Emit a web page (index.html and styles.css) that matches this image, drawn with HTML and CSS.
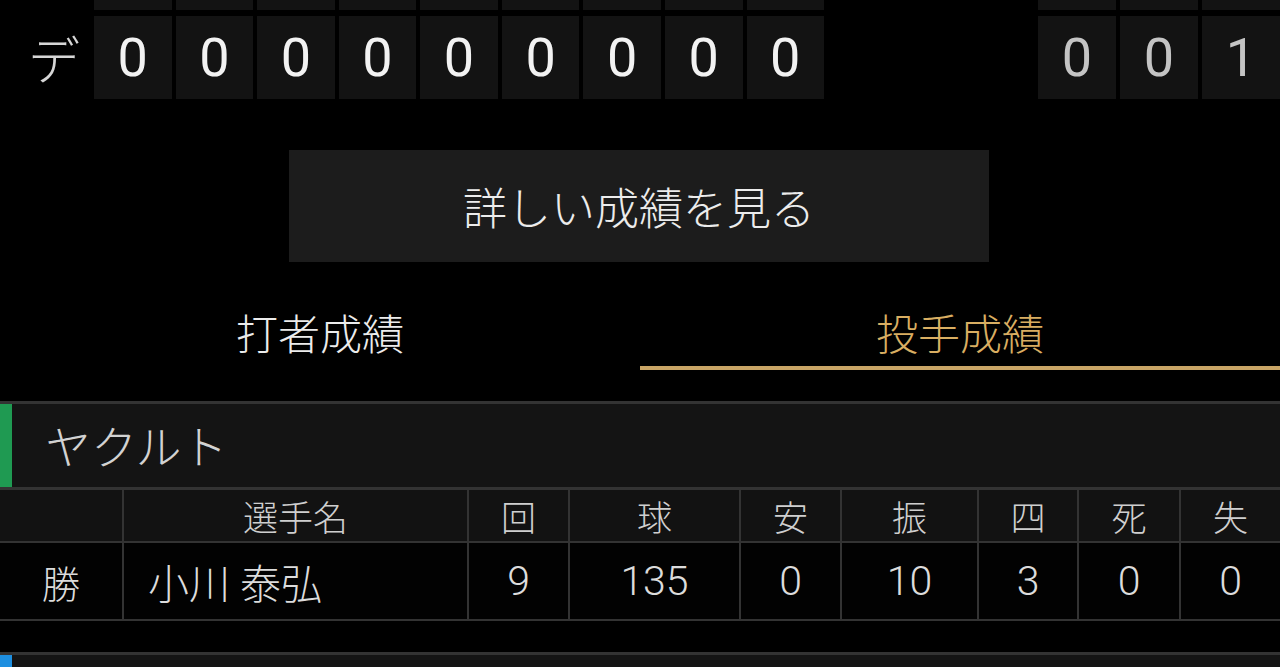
FILE: index.html
```html
<!DOCTYPE html>
<html lang="ja">
<head>
<meta charset="utf-8">
<link rel="stylesheet" href="styles.css">
</head>
<body>
<div class="page">
  <section class="score">
    <div class="score-row partial">
      <div class="team"></div>
      <div class="innings">
        <div class="cell"></div><div class="cell"></div><div class="cell"></div>
        <div class="cell"></div><div class="cell"></div><div class="cell"></div>
        <div class="cell"></div><div class="cell"></div><div class="cell"></div>
      </div>
      <div class="totals">
        <div class="cell"></div><div class="cell"></div><div class="cell"></div>
      </div>
    </div>
    <div class="score-row full">
      <div class="team">デ</div>
      <div class="innings">
        <div class="cell">0</div><div class="cell">0</div><div class="cell">0</div>
        <div class="cell">0</div><div class="cell">0</div><div class="cell">0</div>
        <div class="cell">0</div><div class="cell">0</div><div class="cell">0</div>
      </div>
      <div class="totals">
        <div class="cell">0</div><div class="cell">0</div><div class="cell">1</div>
      </div>
    </div>
  </section>

  <div class="btn-wrap">
    <div class="detail-btn">詳しい成績を見る</div>
  </div>

  <nav class="tabs">
    <div class="tab">打者成績</div>
    <div class="tab active">投手成績</div>
  </nav>

  <div class="team-head green">ヤクルト</div>
  <div class="stats">
    <div class="hd"></div>
    <div class="hd">選手名</div>
    <div class="hd">回</div>
    <div class="hd">球</div>
    <div class="hd">安</div>
    <div class="hd">振</div>
    <div class="hd">四</div>
    <div class="hd">死</div>
    <div class="hd">失</div>
    <div class="td res">勝</div>
    <div class="td name">小川 泰弘</div>
    <div class="td">9</div>
    <div class="td">135</div>
    <div class="td">0</div>
    <div class="td">10</div>
    <div class="td">3</div>
    <div class="td">0</div>
    <div class="td">0</div>
  </div>

  <div class="team-head blue next"></div>
</div>
</body>
</html>
```

FILE: styles.css
```css
* { box-sizing: border-box; }
html, body { margin: 0; padding: 0; background: #000; }
body {
  width: 1280px;
  height: 667px;
  overflow: hidden;
  font-family: "Roboto", "Noto Sans CJK JP", sans-serif;
  color: #e8e8e8;
}
.page { display: flex; flex-direction: column; height: 667px; overflow: hidden; }

.score { display: flex; flex-direction: column; gap: 6px; flex: none; }
.score-row { display: flex; }
.score-row.partial { height: 10px; }
.score-row.full { height: 83px; }
.team {
  width: 94px;
  padding-left: 28px;
  font-family: "Noto Sans CJK JP", sans-serif;
  font-weight: 300;
  font-size: 52px;
  line-height: 83px;
  color: #d6d6d6;
}
.innings { display: flex; gap: 4px; width: 730px; }
.innings .cell { width: 78px; }
.totals { display: flex; gap: 4px; margin-left: auto; }
.totals .cell { width: 78px; color: #c4c4c4; }
.cell {
  background: #131313;
  display: flex;
  align-items: center;
  justify-content: center;
  font-size: 54px;
  line-height: 1;
  color: #f2f2f2;
}

.btn-wrap { display: flex; justify-content: center; padding-top: 51px; flex: none; }
.detail-btn {
  width: 700px;
  height: 112px;
  background: #1c1c1c;
  display: flex;
  align-items: center;
  justify-content: center;
  font-family: "Noto Sans CJK JP", sans-serif;
  font-weight: 300;
  font-size: 44px;
  color: #ececec;
  margin-left: -2px;
}

.tabs { display: flex; height: 108px; flex: none; }
.tab {
  flex: 1;
  display: flex;
  align-items: flex-end;
  justify-content: center;
  padding-bottom: 9px;
  font-family: "Noto Sans CJK JP", sans-serif;
  font-weight: 300;
  font-size: 42px;
  line-height: 1.2;
  color: #ececec;
  border-bottom: 4px solid transparent;
}
.tab.active { color: #d9ae62; border-bottom-color: #c9a566; }

.team-head {
  flex: none;
  margin-top: 31px;
  height: 89px;
  border-top: 3px solid #333;
  border-bottom: 3px solid #333;
  background: #141414;
  padding-left: 45px;
  font-family: "Noto Sans CJK JP", sans-serif;
  font-weight: 300;
  font-size: 46px;
  line-height: 80px;
  color: #d2d2d2;
  position: relative;
}
.team-head::before {
  content: "";
  position: absolute;
  left: 0;
  top: 0;
  bottom: 0;
  width: 12px;
}
.team-head.green::before { background: #1f9a52; }
.team-head.blue::before { background: #1e8fe0; }
.team-head.next { margin-top: 31px; border-bottom: none; }

.stats {
  flex: none;
  display: grid;
  grid-template-columns: 122px 343px 99px 169px 99px 135px 98px 100px 99px;
  grid-template-rows: 51px 76px;
  column-gap: 2px;
  row-gap: 2px;
  background: #333;
  border-bottom: 2px solid #333;
}
.hd, .td {
  display: flex;
  align-items: center;
  justify-content: center;
  font-family: "Roboto", "Noto Sans CJK JP", sans-serif;
}
.hd {
  background: #121212;
  font-weight: 300;
  font-size: 35px;
  color: #cfcfcf;
}
.td {
  background: #020202;
  font-weight: 300;
  font-size: 41px;
  color: #dcdcdc;
}
.td.res { font-size: 38px; }
.td.name { justify-content: flex-start; padding-left: 24px; font-size: 41px; }
```
